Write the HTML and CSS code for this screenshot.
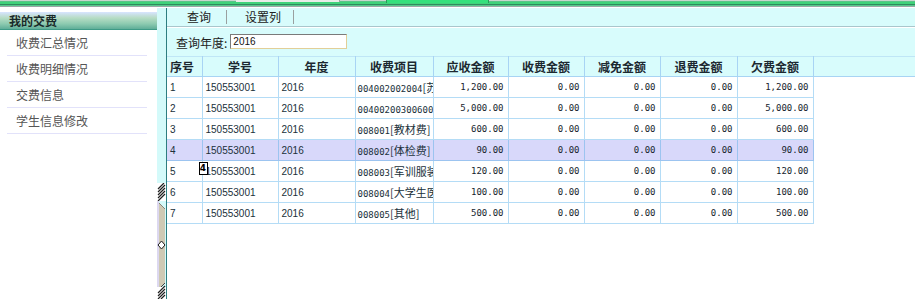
FILE: index.html
```html
<!DOCTYPE html>
<html lang="zh-CN">
<head>
    <meta charset="UTF-8">
    <meta name="viewport" content="width=device-width, initial-scale=1.0">
    <title>我的交费</title>
    <link rel="stylesheet" href="styles.css">
</head>
<body>

    <div class="topbar">
        <span class="tab tab-gray"></span>
        <span class="tab tab-green"></span>
    </div>

    <div class="frame">
        <aside class="side">
            <div class="side-head">我的交费</div>
            <ul class="menu">
                <li>收费汇总情况</li>
                <li>收费明细情况</li>
                <li>交费信息</li>
                <li>学生信息修改</li>
            </ul>
        </aside>

        <div class="splitter">
            <svg class="grip" width="9" height="116" viewBox="0 0 9 116">
                <!-- 上方斜纹 -->
                <rect x="0" y="0" width="9" height="18" fill="#ffffff"/>
                <path d="M1 6 L7 0 M1 9 L8 2 M1 12 L8 5 M1 15 L8 8 M1 18 L8 11" stroke="#202020" stroke-width="1.2"/>
                <path d="M0 18 L8 26" stroke="#404040" stroke-width="1"/>
                <!-- 中间拖动条 -->
                <polygon points="0,18 8,26 8,100 0,108" fill="#cfc9b4"/>
                <rect x="0" y="18" width="2" height="90" fill="#dcd8f0"/>
                <polygon points="4.5,58 8,62 4.5,66 1,62" fill="#ffffff" stroke="#202020" stroke-width="1"/>
                <!-- 下方斜纹 -->
                <path d="M0 108 L8 100" stroke="#404040" stroke-width="1"/>
                <rect x="0" y="104" width="9" height="12" fill="#ffffff"/>
                <path d="M1 110 L8 103 M1 113 L8 106 M1 116 L8 109 M4 116 L8 112" stroke="#202020" stroke-width="1.2"/>
            </svg>
        </div>

        <main class="main">
            <div class="toolbar">
                <span class="tool tool-query">查询</span>
                <span class="tool tool-cols">设置列</span>
            </div>

            <div class="query">
                <label for="yearInput">查询年度:</label>
                <input type="text" id="yearInput" value="2016">
            </div>

            <table class="grid">
                <colgroup>
                    <col style="width:35px">
                    <col style="width:76px">
                    <col style="width:77px">
                    <col style="width:78px">
                    <col style="width:75px">
                    <col style="width:76px">
                    <col style="width:76px">
                    <col style="width:77px">
                    <col style="width:76px">
                    <col>
                </colgroup>
                <thead>
                    <tr>
                        <th class="num-head">序号</th>
                        <th>学号</th>
                        <th>年度</th>
                        <th>收费项目</th>
                        <th>应收金额</th>
                        <th>收费金额</th>
                        <th>减免金额</th>
                        <th>退费金额</th>
                        <th>欠费金额</th>
                        <th class="filler"></th>
                    </tr>
                </thead>
                <tbody>
                    <tr>
                        <td>1</td><td>150553001</td><td>2016</td>
                        <td class="item">004002002004<span class="cjk">[苏州住宿费]</span></td>
                        <td class="money">1,200.00</td><td class="money">0.00</td><td class="money">0.00</td><td class="money">0.00</td><td class="money">1,200.00</td>
                        <td class="filler"></td>
                    </tr>
                    <tr>
                        <td>2</td><td>150553001</td><td>2016</td>
                        <td class="item">004002003006001<span class="cjk">[学费]</span></td>
                        <td class="money">5,000.00</td><td class="money">0.00</td><td class="money">0.00</td><td class="money">0.00</td><td class="money">5,000.00</td>
                        <td class="filler"></td>
                    </tr>
                    <tr>
                        <td>3</td><td>150553001</td><td>2016</td>
                        <td class="item">008001<span class="cjk">[教材费]</span></td>
                        <td class="money">600.00</td><td class="money">0.00</td><td class="money">0.00</td><td class="money">0.00</td><td class="money">600.00</td>
                        <td class="filler"></td>
                    </tr>
                    <tr class="selected">
                        <td>4</td><td>150553001</td><td>2016</td>
                        <td class="item">008002<span class="cjk">[体检费]</span></td>
                        <td class="money">90.00</td><td class="money">0.00</td><td class="money">0.00</td><td class="money">0.00</td><td class="money">90.00</td>
                        <td class="filler"></td>
                    </tr>
                    <tr>
                        <td>5</td><td class="tip-cell">150553001<span class="tip">4</span></td><td>2016</td>
                        <td class="item">008003<span class="cjk">[军训服装费]</span></td>
                        <td class="money">120.00</td><td class="money">0.00</td><td class="money">0.00</td><td class="money">0.00</td><td class="money">120.00</td>
                        <td class="filler"></td>
                    </tr>
                    <tr>
                        <td>6</td><td>150553001</td><td>2016</td>
                        <td class="item">008004<span class="cjk">[大学生医保]</span></td>
                        <td class="money">100.00</td><td class="money">0.00</td><td class="money">0.00</td><td class="money">0.00</td><td class="money">100.00</td>
                        <td class="filler"></td>
                    </tr>
                    <tr>
                        <td>7</td><td>150553001</td><td>2016</td>
                        <td class="item">008005<span class="cjk">[其他]</span></td>
                        <td class="money">500.00</td><td class="money">0.00</td><td class="money">0.00</td><td class="money">0.00</td><td class="money">500.00</td>
                        <td class="filler"></td>
                    </tr>
                </tbody>
            </table>
        </main>
    </div>

</body>
</html>
```

FILE: styles.css
```css
* {
    box-sizing: border-box;
}
body {
    margin: 0;
    padding: 0;
    background: #ffffff;
    font-family: "Noto Sans CJK SC", "Liberation Sans", sans-serif;
    font-size: 12px;
    color: #333;
    height: 299px;
    overflow: hidden;
}

/* 顶部标签条 */
.topbar {
    height: 8px;
    position: relative;
    background: linear-gradient(to bottom,
        #c9d6cf 0, #c9d6cf 1px,
        #5ac488 1px, #5ac488 2px,
        #3fd27a 2px, #3fd27a 4px,
        #2f8a5e 4px, #2f8a5e 5px,
        #56c98a 5px, #56c98a 6px,
        #9aa6a6 6px, #9aa6a6 7px,
        #ffffff 7px);
}
.tab {
    position: absolute;
    top: 0;
    height: 2px;
}
.tab-gray {
    left: 236px;
    width: 104px;
    background: #e8ece8;
    border-right: 1px solid #a0a0a0;
}
.tab-green {
    left: 386px;
    width: 103px;
    height: 3px;
    background: #34e07c;
    border-left: 1px solid #2a9a5a;
    border-right: 1px solid #2a9a5a;
}

.frame {
    display: flex;
    height: 291px;
}

/* 左侧菜单 */
.side {
    width: 157px;
    flex: none;
    padding-top: 4px;
    background: #ffffff;
}
.side-head {
    height: 18px;
    line-height: 17px;
    padding-left: 9px;
    font-weight: bold;
    font-size: 12px;
    color: #1a2a2a;
    background: linear-gradient(to bottom, #d8e4ff 0%, #b6dcc4 35%, #8ccab0 70%, #5fae98 100%);
    border-bottom: 1px solid #3e9a86;
}
.menu {
    list-style: none;
    margin: 0;
    padding: 0;
}
.menu li {
    height: 26px;
    line-height: 26px;
    margin: 0 10px 0 7px;
    padding-left: 9px;
    color: #555;
    border-bottom: 1px solid #e2e2fa;
}

/* 分隔条 */
.splitter {
    width: 10px;
    flex: none;
    background: #d4fafa;
    border-right: 1px solid #2d7d80;
    padding-top: 175px;
}
.grip {
    display: block;
}

/* 右侧内容 */
.main {
    flex: 1;
    min-width: 0;
    display: flex;
    flex-direction: column;
    background: #ffffff;
}
.toolbar {
    height: 19px;
    flex: none;
    display: flex;
    align-items: center;
    background: #d8fcfc;
    border-bottom: 1px solid #a9c6cc;
    box-shadow: 0 1px 0 #ffffff;
}
.tool {
    line-height: 14px;
    color: #222;
    border-right: 1px solid #9aa0a0;
}
.tool-query {
    margin-left: 20px;
    padding-right: 15px;
}
.tool-cols {
    padding-left: 18px;
    padding-right: 12px;
}
.query {
    height: 28px;
    flex: none;
    margin-top: 1px;
    padding-left: 9px;
    display: flex;
    align-items: center;
    background: #d8fcfc;
}
.query label {
    color: #222;
    white-space: nowrap;
    margin-right: 3px;
}
.query input {
    width: 117px;
    height: 15px;
    margin-top: -1px;
    padding: 0 2px;
    font-family: "Liberation Sans", sans-serif;
    font-size: 10px;
    color: #111;
    background: #ffffff;
    border: 1px solid;
    border-color: #7a7a7a #e2cf98 #e2cf98 #7a7a7a;
    outline: none;
}

/* 表格 */
.grid {
    width: 100%;
    table-layout: fixed;
    border-collapse: collapse;
}
.grid th {
    height: 20px;
    padding: 0;
    font-weight: bold;
    font-size: 12px;
    color: #1c2830;
    text-align: center;
    background: #d8fcfc;
    border: 1px solid #a8d4f4;
    border-top-color: #bfe6f6;
    overflow: hidden;
    white-space: nowrap;
}
.grid th.num-head {
    text-align: left;
    padding-left: 3px;
    border-left: none;
}
.grid th.filler {
    border-right: none;
}
.grid td {
    height: 21px;
    padding: 0 0 0 3px;
    font-family: "Liberation Sans", sans-serif;
    font-size: 10px;
    color: #20303a;
    border: 1px solid #b4dcf6;
    overflow: hidden;
    white-space: nowrap;
    text-overflow: clip;
}
.grid td:first-child {
    border-left: none;
}
.grid td.item {
    padding-left: 2px;
    font-family: "DejaVu Sans Mono", monospace;
    font-size: 9px;
}
.grid td.item .cjk {
    font-family: "Noto Sans CJK SC", sans-serif;
    font-size: 11px;
}
.grid td.money {
    text-align: right;
    padding: 0 4px 0 0;
    font-family: "DejaVu Sans Mono", monospace;
    font-size: 9px;
    color: #16242e;
}
.grid td.filler {
    border: none;
    background: #ffffff;
}
.grid tr.selected td {
    background: #d8d8fa;
    border-color: #9cc4f0;
}
.grid tr.selected td.filler {
    background: #ffffff;
}
.grid td.tip-cell {
    position: relative;
    overflow: visible;
}
.tip {
    position: absolute;
    left: -4px;
    top: 1px;
    width: 9px;
    height: 13px;
    line-height: 11px;
    text-align: center;
    font-family: "DejaVu Sans", sans-serif;
    font-size: 9px;
    font-weight: bold;
    color: #000;
    background: #ffffff;
    border: 1px solid #000;
}
```
